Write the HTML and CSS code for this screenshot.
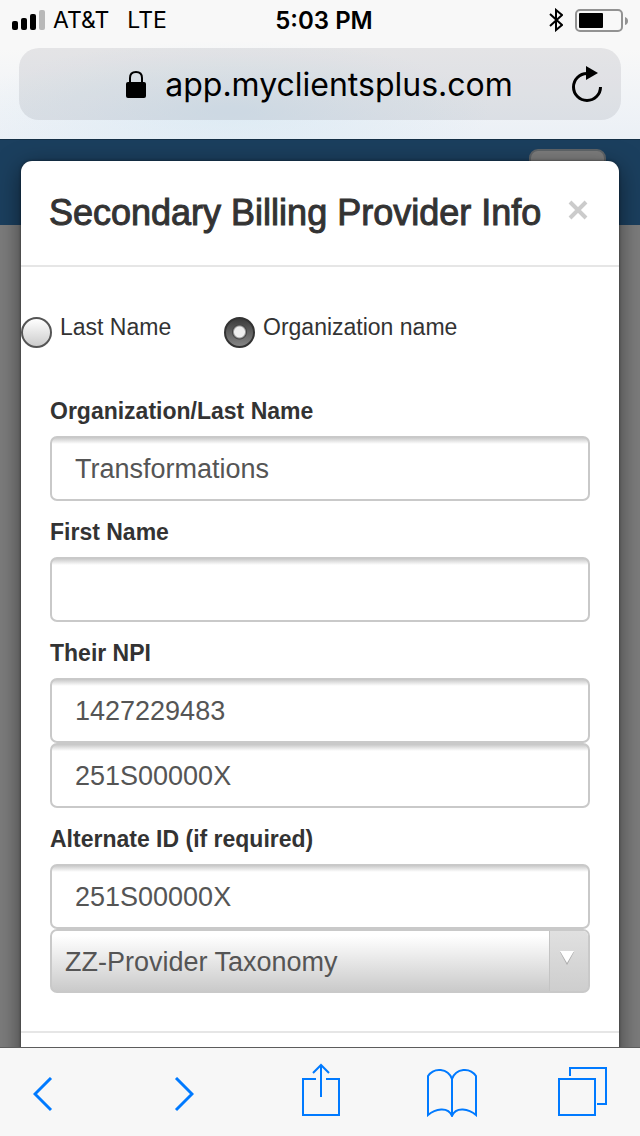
FILE: index.html
```html
<!DOCTYPE html>
<html lang="en">
<head>
<meta charset="utf-8">
<meta name="viewport" content="width=device-width">
<title>Secondary Billing Provider Info</title>
<link rel="stylesheet" href="styles.css">
</head>
<body>
<header class="browser-top">
  <div class="status">
    <div class="status-left">
      <svg width="33" height="20" viewBox="0 0 33 20" aria-hidden="true"><rect y="11" width="6" height="9" rx="2"/><rect x="9" y="8" width="6" height="12" rx="2"/><rect x="18" y="4" width="6" height="16" rx="2"/><rect x="27" width="6" height="20" rx="2" fill="#b9b9b9"/></svg>
      <span>AT&amp;T</span><span class="network">LTE</span>
    </div>
    <div class="clock">5:03 PM</div>
    <div class="status-right">
      <svg width="14" height="24" viewBox="0 0 14 24" fill="none" stroke="#000" stroke-width="2" aria-hidden="true"><path d="M1 6l12 11-6 5V2l6 5L1 18"/></svg>
      <svg width="53" height="23" viewBox="0 0 53 23" aria-hidden="true"><rect x="1" y="1" width="46" height="21" rx="4" fill="none" stroke="#929292" stroke-width="2"/><rect x="4" y="4" width="24" height="15" rx="1"/><path d="M50 8q3 1 3 4t-3 4z" fill="#929292"/></svg>
    </div>
  </div>
  <div class="address">
    <div class="site">
      <svg width="20" height="27" viewBox="0 0 20 27" aria-hidden="true"><rect y="11" width="20" height="16" rx="2"/><path d="M4 12V7q0-6 6-6t6 6v5" fill="none" stroke="#000" stroke-width="2"/></svg>
      <span>app.myclientsplus.com</span>
    </div>
    <button class="icon-button reload" type="button" aria-label="Reload"><svg width="31" height="36" viewBox="0 0 31 36" fill="none"><path d="M16 7.500A13.500 13.500 0 1 0 29.500 21" stroke="#000" stroke-width="3"/><path d="M15 0l12 7-12 7z" fill="#000"/></svg></button>
  </div>
</header>

<main class="page">
  <div class="navbar"><button class="menu" type="button" aria-label="Menu"></button></div>
  <form class="modal" role="dialog" aria-labelledby="title">
    <div class="modal-header">
      <h1 id="title">Secondary Billing Provider Info</h1>
      <button class="icon-button" type="button" aria-label="Close"><svg width="20" height="20" viewBox="0 0 20 20" stroke="#cbcbcb" stroke-width="4"><path d="M2 2l16 16M18 2L2 18"/></svg></button>
    </div>
    <div class="choices">
      <label class="choice"><input type="radio" name="kind"><span>Last Name</span></label>
      <label class="choice"><input type="radio" name="kind" checked><span>Organization name</span></label>
    </div>
    <div class="fields">
      <label for="org">Organization/Last Name</label>
      <input id="org" type="text" value="Transformations">
      <label for="first">First Name</label>
      <input id="first" type="text">
      <label for="npi">Their NPI</label>
      <input id="npi" type="text" value="1427229483">
      <input type="text" aria-label="Taxonomy code" value="251S00000X">
      <label for="alt">Alternate ID (if required)</label>
      <input id="alt" type="text" value="251S00000X">
      <div class="select">
        <select aria-label="Alternate ID type"><option>ZZ-Provider Taxonomy</option></select>
        <span class="select-arrow"><svg width="14" height="14" viewBox="0 0 14 14"><path d="M0 1h14L7 14z" fill="#aaa"/><path d="M0 0h14L7 12z" fill="#fff"/></svg></span>
      </div>
    </div>
    <div class="modal-footer"></div>
  </form>
</main>

<nav class="toolbar">
  <button class="icon-button back" type="button" aria-label="Back"><svg width="20" height="40" viewBox="0 0 20 40"><path d="M18 1L2 17l16 16" stroke-width="3"/></svg></button>
  <button class="icon-button forward" type="button" aria-label="Forward"><svg width="20" height="40" viewBox="0 0 20 40"><path d="M2 1l16 16L2 33" stroke-width="3"/></svg></button>
  <button class="icon-button" type="button" aria-label="Share"><svg width="38" height="54" viewBox="0 0 38 54"><path d="M14 16H1v36h36V16H24M19 34V2M11 10l8-8 8 8"/></svg></button>
  <button class="icon-button" type="button" aria-label="Bookmarks"><svg width="50" height="50" viewBox="0 0 50 50"><path d="M25 12v36M25 12C21 1 7 0 1 9v39c7-6 20-9 24 1 4-10 17-7 24-1V9C43 0 29 1 25 12"/></svg></button>
  <button class="icon-button" type="button" aria-label="Tabs"><svg width="50" height="50" viewBox="0 0 50 50"><path d="M1 12h36v36H1zM12 9V1h36v36h-9"/></svg></button>
</nav>
</body>
</html>
```
FILE: styles.css
```css
* { box-sizing: border-box; }

body {
  margin: 0;
  height: 100vh;
  display: flex;
  flex-direction: column;
  font-family: "Liberation Sans", Arial, sans-serif;
  color: #333;
}

button, input, select { font: inherit; color: inherit; margin: 0; }
svg { display: block; flex: none; }

.icon-button { border: 0; padding: 0; background: none; }

.browser-top {
  padding: 0 19px 19px;
  border-bottom: 1px solid #142f46;
  font-family: Inter, sans-serif;
  color: #000;
  background:
    radial-gradient(ellipse at 36% 80%, rgba(205, 228, 242, .5), transparent 45%),
    linear-gradient(#f8f8f8 35%, #ebf0f6);
}

.status {
  display: grid;
  grid-template-columns: 1fr auto 1fr;
  align-items: center;
  height: 40px;
  margin: 0 -7px 8px;
  font-size: 23px;
}
.status-left, .status-right { display: flex; align-items: center; gap: 8px; }
.network { margin-left: 10px; }
.clock { font-size: 24px; font-weight: 600; padding-left: 8px; }
.status-right { justify-content: flex-end; gap: 12px; }

.address {
  display: flex;
  align-items: center;
  height: 72px;
  padding: 0 19px;
  border-radius: 20px;
  background: rgba(30, 30, 60, .09);
}
.site {
  flex: 1;
  display: flex;
  align-items: center;
  justify-content: center;
  gap: 19px;
  padding-left: 30px;
  font-size: 32px;
}

.page {
  position: relative;
  flex: 1;
  min-height: 0;
  overflow: hidden;
  padding: 21px 21px 0;
  background: #7c7c7c;
}
.navbar {
  position: absolute;
  inset: 0 0 auto;
  height: 85px;
  padding: 9px 34px;
  text-align: right;
  background: #1b3f5e;
}
.menu {
  width: 77px;
  height: 60px;
  border: 2px solid #5f6468;
  border-radius: 9px;
  background: #7d7d7d;
}

.modal {
  position: relative;
  border-radius: 11px;
  background: #fff;
  box-shadow: 0 6px 24px rgba(0, 0, 0, .5), 0 0 3px rgba(0, 0, 0, .5);
}
.modal-header {
  display: flex;
  align-items: center;
  justify-content: space-between;
  height: 106px;
  padding: 0 31px 6px 28px;
  border-bottom: 2px solid #e6e6e6;
}
h1 {
  margin: 0;
  padding-top: 6px;
  font-size: 36px;
  font-weight: 400;
  line-height: 40px;
  -webkit-text-stroke: 1px #333;
}

.choices {
  display: grid;
  grid-template-columns: 203px 1fr;
  padding: 50px 0 32px;
  font-size: 23px;
  line-height: 20px;
}
.choice { display: flex; align-items: flex-start; gap: 8px; }
.choice input {
  appearance: none;
  flex: none;
  width: 31px;
  height: 31px;
  border: 2px solid #555;
  border-radius: 50%;
  background: linear-gradient(#fff, #ccc);
}
.choice input:checked {
  border-color: #333;
  background:
    radial-gradient(circle at 50% 48%, #eee 5px, #444 7px, transparent 8px),
    linear-gradient(#3c3c3c, #858585);
}

.fields { display: flex; flex-direction: column; padding: 0 29px 38px; }
.fields label {
  padding: 18px 0 12px;
  font-size: 23px;
  font-weight: 700;
  line-height: 26px;
}
.fields input, .fields select {
  width: 100%;
  height: 65px;
  border: 2px solid #c9c9c9;
  border-radius: 7px;
  font-size: 27px;
  color: #555;
}
.fields input {
  padding: 2px 23px 0;
  background: linear-gradient(#ccc, #fff 6px);
}
.select { position: relative; }
.fields select {
  display: block;
  height: 64px;
  appearance: none;
  padding: 2px 40px 0 13px;
  background: linear-gradient(#fff 8%, #cacaca);
}
.select-arrow {
  position: absolute;
  inset: 2px 2px 2px auto;
  width: 39px;
  display: grid;
  place-items: center;
  padding: 0 4px 6px 0;
  border-left: 1px solid #c4c4c4;
  border-radius: 0 5px 5px 0;
  background: linear-gradient(#e0e0e0, #cecece);
  pointer-events: none;
}
.modal-footer { height: 80px; border-top: 2px solid #e6e6e6; }

.toolbar {
  display: flex;
  align-items: flex-end;
  justify-content: space-between;
  height: 89px;
  padding: 0 32px 19px 33px;
  border-top: 1px solid #5c5c5c;
  background: #f7f7f7;
}
.toolbar .icon-button { display: flex; justify-content: center; width: 50px; }
.toolbar .back { justify-content: flex-start; }
.toolbar .forward { padding-right: 10px; }
.toolbar svg { fill: none; stroke: #007aff; stroke-width: 2; }
```
